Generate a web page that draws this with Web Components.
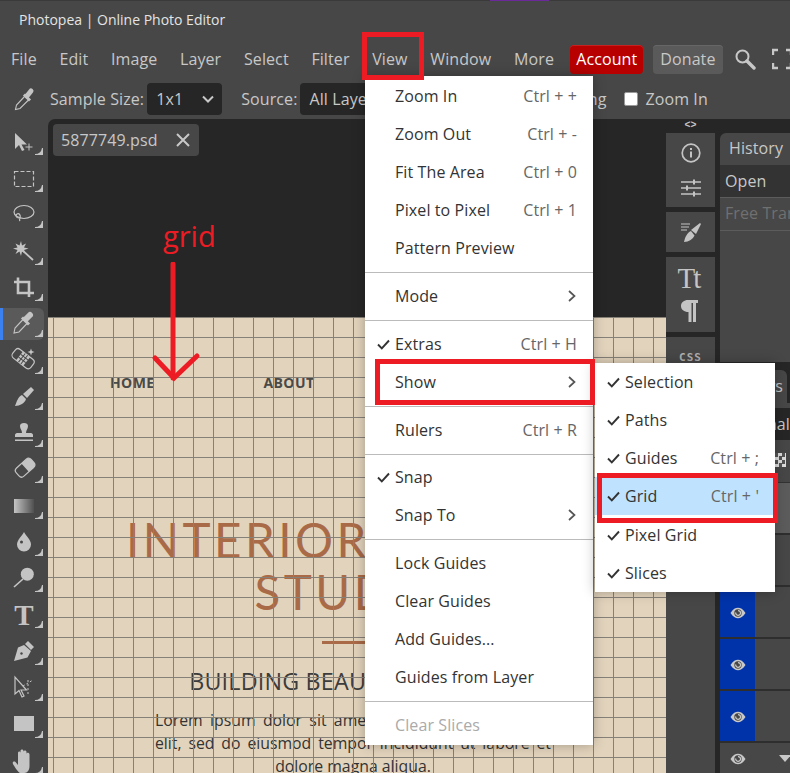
<!DOCTYPE html>
<html>
<head>
<meta charset="utf-8">
<title>Photopea</title>
<style>
    html, body { margin: 0; background: #474747; overflow: hidden; }
</style>
</head>
<body>
<pp-app>
    <pp-titlebar slot="title">Photopea | Online Photo Editor</pp-titlebar>
    <pp-menubar slot="menu"></pp-menubar>
    <pp-options slot="options"></pp-options>
    <pp-toolbar slot="tools"></pp-toolbar>
    <pp-document slot="doc" tab="5877749.psd"></pp-document>
    <pp-dock slot="dock"></pp-dock>
    <pp-panels slot="panels"></pp-panels>

    <pp-menu slot="overlay" style="left:365px;top:76px;width:228px;height:669px;padding-top:1px">
        <pp-item label="Zoom In" keys="Ctrl + +"></pp-item>
        <pp-item label="Zoom Out" keys="Ctrl + -"></pp-item>
        <pp-item label="Fit The Area" keys="Ctrl + 0"></pp-item>
        <pp-item label="Pixel to Pixel" keys="Ctrl + 1"></pp-item>
        <pp-item label="Pattern Preview"></pp-item>
        <pp-sep></pp-sep>
        <pp-item label="Mode" arrow></pp-item>
        <pp-sep></pp-sep>
        <pp-item label="Extras" keys="Ctrl + H" checked></pp-item>
        <pp-item label="Show" arrow></pp-item>
        <pp-sep></pp-sep>
        <pp-item label="Rulers" keys="Ctrl + R"></pp-item>
        <pp-sep style="margin-bottom:3.500px"></pp-sep>
        <pp-item label="Snap" checked></pp-item>
        <pp-item label="Snap To" arrow></pp-item>
        <pp-sep></pp-sep>
        <pp-item label="Lock Guides"></pp-item>
        <pp-item label="Clear Guides"></pp-item>
        <pp-item label="Add Guides..."></pp-item>
        <pp-item label="Guides from Layer"></pp-item>
        <pp-sep></pp-sep>
        <pp-item label="Clear Slices" disabled></pp-item>
    </pp-menu>

    <pp-menu slot="overlay" style="left:595px;top:363px;width:180px;height:229px">
        <pp-item label="Selection" checked></pp-item>
        <pp-item label="Paths" checked></pp-item>
        <pp-item label="Guides" keys="Ctrl + ;" checked></pp-item>
        <pp-item label="Grid" keys="Ctrl + '" checked active></pp-item>
        <pp-item label="Pixel Grid" checked style="margin-top:1px"></pp-item>
        <pp-item label="Slices" checked></pp-item>
    </pp-menu>

    <pp-mark slot="overlay" style="left:362px;top:32px;width:62px;height:48px"></pp-mark>
    <pp-mark slot="overlay" style="left:375px;top:359px;width:220px;height:46px"></pp-mark>
    <pp-mark slot="overlay" style="left:597px;top:473px;width:181px;height:50px"></pp-mark>
    <pp-note slot="overlay" style="left:150px;top:217px">grid</pp-note>
</pp-app>

<script>
const EYE = `<svg width="16" height="12" viewBox="0 0 16 12"><path d="M.5 6C3 2 5.500.8 8 .8S13 2 15.500 6C13 10 10.500 11.200 8 11.200S3 10 .5 6z" fill="#c8c8c8"/><circle cx="8" cy="6" r="3.700" fill="#474747"/><path d="M5.800 5.500A2.400 2.400 0 1 0 8 3.600" fill="none" stroke="#c8c8c8" stroke-width="1.300"/></svg>`;

class PpApp extends HTMLElement {
    constructor() {
        super();
        this.attachShadow({ mode: 'open' });
        this.shadowRoot.innerHTML = `
            <style>
                :host {
                    display: block;
                    position: relative;
                    width: 790px;
                    height: 773px;
                    overflow: hidden;
                    background: #474747;
                    color: #c8c8c8;
                    font: 16px "Open Sans", "Noto Sans", sans-serif;
                    letter-spacing: .1px;
                }
                .strip { height: 1px; background: #3a3a3a; display: flex; }
                .strip i { display: block; width: 59px; margin-left: 490px; background: #6a2a9a; }
                .work { display: flex; height: 654px; }
                ::slotted([slot="doc"]) { flex: none; }
            </style>
            <div class="strip"><i></i></div>
            <slot name="title"></slot>
            <slot name="menu"></slot>
            <slot name="options"></slot>
            <div class="work">
                <slot name="tools"></slot>
                <slot name="doc"></slot>
                <slot name="dock"></slot>
                <slot name="panels"></slot>
            </div>
            <slot name="overlay"></slot>
        `;
    }
}

class PpTitlebar extends HTMLElement {
    constructor() {
        super();
        this.attachShadow({ mode: 'open' });
        this.shadowRoot.innerHTML = `
            <style>
                :host {
                    display: flex;
                    align-items: center;
                    height: 37px;
                    padding: 0 0 2px 19px;
                    font-size: 14px;
                    letter-spacing: 0;
                    color: #e4e4e4;
                }
            </style>
            <slot></slot>
        `;
    }
}

class PpMenubar extends HTMLElement {
    constructor() {
        super();
        this.attachShadow({ mode: 'open' });
        const names = ['File', 'Edit', 'Image', 'Layer', 'Select', 'Filter', 'View', 'Window', 'More'];
        this.shadowRoot.innerHTML = `
            <style>
                :host {
                    display: flex;
                    align-items: center;
                    height: 38px;
                    padding-left: 11px;
                    gap: 22.700px;
                    white-space: nowrap;
                }
                .btn {
                    display: flex;
                    align-items: center;
                    height: 29px;
                    padding: 0 6px;
                    border-radius: 4px;
                    box-sizing: border-box;
                }
                .acc { background: #b80000; color: #fff; margin-left: -6.500px; box-shadow: inset 0 1px #c62222; }
                .don { background: #5a5a5a; margin-left: -12.700px; padding: 0 7px; box-shadow: inset 0 1px #666; }
                svg { display: block; flex: none; }
            </style>
            ${names.map(n => `<span>${n}</span>`).join('')}
            <span class="btn acc">Account</span>
            <span class="btn don">Donate</span>
            <svg style="margin-left:-11.700px" width="22" height="22" viewBox="0 0 22 22" fill="none" stroke="#c8c8c8">
                <circle cx="8.500" cy="8.500" r="6" stroke-width="2"/>
                <path d="M13 13l7 7" stroke-width="3.400" stroke-linecap="round"/>
            </svg>
            <svg style="margin-left:-6.700px" width="20" height="22" viewBox="0 0 20 22" fill="none" stroke="#c8c8c8" stroke-width="2.400">
                <path d="M1 7V2H6M14 2H19V7M19 15V20H14M6 20H1V15"/>
            </svg>
        `;
    }
}

class PpOptions extends HTMLElement {
    constructor() {
        super();
        this.attachShadow({ mode: 'open' });
        this.shadowRoot.innerHTML = `
            <style>
                :host {
                    display: flex;
                    align-items: center;
                    height: 41px;
                    padding-left: 14px;
                    white-space: nowrap;
                }
                .sel {
                    display: flex;
                    align-items: center;
                    justify-content: space-between;
                    box-sizing: border-box;
                    height: 32px;
                    padding: 0 8px 0 9px;
                    background: #262626;
                    border-radius: 4px;
                }
                .box {
                    width: 14px;
                    height: 14px;
                    background: #fff;
                    border: 1px solid #999;
                    box-sizing: border-box;
                    border-radius: 2px;
                    margin: 0 7px 0 22px;
                }
                svg { display: block; flex: none; }
            </style>
            <svg width="22" height="24" viewBox="0 0 22 24" fill="none" stroke="#c4c4c4">
                <path d="M11 9L2.500 18 1.500 22.500 6 21.500 14.500 13" stroke-width="1.100"/>
                <path d="M10 7.500l6 6" stroke-width="3"/>
                <path d="M13 9l4-5" stroke-width="5" stroke-linecap="round"/>
            </svg>
            <span style="margin-left:14px">Sample Size:</span>
            <div class="sel" style="width:75px;margin-left:3px">1x1
                <svg width="12" height="8" viewBox="0 0 12 8" fill="none" stroke="#c8c8c8" stroke-width="2"><path d="M1 1.500l5 5 5-5"/></svg>
            </div>
            <span style="margin-left:19px">Source:</span>
            <div class="sel" style="width:190px;margin-left:3px">All Layers</div>
            <span style="margin-left:-36px;width:148px;text-align:right">Show Sampling Ring</span>
            <div class="box"></div>
            <span>Zoom In</span>
        `;
    }
}

class PpTool extends HTMLElement {
    constructor() {
        super();
        this.attachShadow({ mode: 'open' });
        this.shadowRoot.innerHTML = `
            <style>
                :host {
                    display: flex;
                    align-items: center;
                    justify-content: center;
                    position: relative;
                    height: 36.400px;
                    width: 48px;
                    color: #c4c4c4;
                }
                :host([active])::before {
                    content: "";
                    position: absolute;
                    left: 0;
                    top: 2px;
                    bottom: 2px;
                    width: 44px;
                    background: #5a5a5a;
                    border-left: 3px solid #3b82f0;
                    box-sizing: border-box;
                    border-radius: 0 6px 6px 0;
                }
                .corner { position: absolute; right: 5px; bottom: 5px; }
                ::slotted(*) { position: relative; }
            </style>
            <slot></slot>
            <svg class="corner" width="8" height="7" viewBox="0 0 8 7"><path d="M0 6Q6 6 7 0L8 0V7H0z" fill="#c4c4c4"/></svg>
        `;
    }
}

class PpToolbar extends HTMLElement {
    constructor() {
        super();
        this.attachShadow({ mode: 'open' });
        const icon = inner => `<svg width="32" height="32" viewBox="0 0 32 32" fill="#c4c4c4" stroke="none">${inner}</svg>`;
        const tools = [
            icon('<path d="M7 7V23l4-4 3 6 2.500-1-3-5.500H19z"/><path d="M17.500 21h7M21 17.500v7" stroke="#c4c4c4" fill="none"/>'),
            icon('<rect x="6.500" y="8.500" width="19" height="15" fill="none" stroke="#c4c4c4" stroke-width="1.200" stroke-dasharray="4 2"/>'),
            icon('<g fill="none" stroke="#c4c4c4" stroke-width="1.200"><ellipse cx="16" cy="13" rx="10" ry="6.500"/><path d="M11 19c-3 0-4-3-2-4s4 1 3 4c-.5 1-1 2 0 3"/></g>'),
            icon('<path d="M13 14l12 11" stroke="#c4c4c4" stroke-width="1.800"/><path d="M13 6l1 4.500 4-2-2 4 4.500 1-4.500 1.500 2 4-4-2.500-1 4.500-1.500-4.500-4 2.500 2-4-4.500-1.500 4.500-1-2-4 4 2z"/>'),
            icon('<path d="M10 5.500V21H26M6 10H21V25" fill="none" stroke="#c4c4c4" stroke-width="2.600"/>'),
            icon('<path d="M15.500 11L7 20 6 25 11 24 19 15.500" fill="none" stroke="#c4c4c4" stroke-width="1.100"/><path d="M14 9.500l7 7" stroke="#c4c4c4" stroke-width="3"/><path d="M18 11l4-4" stroke="#c4c4c4" stroke-width="6" stroke-linecap="round"/>'),
            icon('<g transform="translate(0 -3) rotate(38 15 16)"><rect x="4" y="11" width="23" height="11" rx="3.500" fill="none" stroke="#c4c4c4" stroke-width="1.200"/><rect x="11" y="11" width="9" height="11" fill="#c4c4c4"/><path d="M14 11v11M17 11v11M11 14.500h9M11 18h9" stroke="#474747"/></g><path d="M23 3.500l.9 2.600 2.600.9-2.600.9-.9 2.600-.9-2.600-2.600-.9 2.600-.9z"/>'),
            icon('<path d="M7 25C9 20 10 16 14 14L18 18C17 22 12 25 7 25Z"/><path d="M15 13L23 6L26 9L19 17Z"/>'),
            icon('<path d="M12 9c0-2 1.500-3 4-3s4 1 4 3c0 3-2 4-2 7h5c1 0 2 1 2 2v2H7v-2c0-1 1-2 2-2h5c0-3-2-4-2-7z"/><rect x="7" y="22.500" width="18" height="1.500"/>'),
            icon('<g transform="translate(0 -1) rotate(-42 16 15)"><rect x="7" y="10" width="20" height="11" rx="3.500" fill="none" stroke="#c4c4c4" stroke-width="1.200"/><path d="M17 10h6.500a3.500 3.500 0 0 1 3.500 3.500v4a3.500 3.500 0 0 1-3.500 3.500H17z"/></g>'),
            '<svg width="32" height="32" viewBox="0 0 32 32"><defs><linearGradient id="g"><stop offset="0" stop-color="#c4c4c4"/><stop offset="1" stop-color="#505050"/></linearGradient></defs><rect x="6" y="9" width="20" height="14" fill="url(#g)"/></svg>',
            icon('<path d="M16 6c2 4 7 8 7 12.500a7 7 0 0 1-14 0C9 14 14 10 16 6z"/><circle cx="13.500" cy="16" r="1.500" fill="#474747"/>'),
            icon('<circle cx="19.300" cy="11.200" r="6.500"/><path d="M15 16L6 24" stroke="#c4c4c4" stroke-width="1.600"/>'),
            '<svg width="32" height="32" viewBox="0 0 32 32"><text x="16" y="26" text-anchor="middle" font-family="Liberation Serif" font-weight="700" font-size="29" fill="#c4c4c4">T</text></svg>',
            icon('<path d="M20 5l6 6-3 3-6-6z"/><path d="M16 9l7 6-3.500 6.500L6 25l4-13.500zM7.500 23.500l5-5" fill-rule="evenodd"/><circle cx="13.500" cy="17.500" r="1.200" fill="#474747"/>'),
            icon('<path d="M7 5V22L11 18.500 14 25 16 24 13 18H18.500z" fill="none" stroke="#c4c4c4" stroke-width="1.200"/><path d="M20 8v14M15 14l10-6" stroke="#c4c4c4" stroke-dasharray="2 2"/>'),
            icon('<rect x="6" y="8" width="20" height="15"/>'),
            icon('<path d="M12 28c-2-1-6-7-7-9s1-3 2.500-2l2.500 3V8c0-2 2.500-2 2.500 0v-2c0-2 3-2 3 0v1c0-2 3-2 3 0v2c0-2 3-1.500 3 .5V21c0 4-2 7-5 7z"/>')
        ];
        this.shadowRoot.innerHTML = `
            <style>
                :host { display: block; width: 48px; flex: none; padding-top: 5px; box-sizing: border-box; }
            </style>
            ${tools.map((t, i) => `<pp-tool ${i === 5 ? 'active' : ''}>${t}</pp-tool>`).join('')}
        `;
    }
}

class PpDocument extends HTMLElement {
    constructor() {
        super();
        this.attachShadow({ mode: 'open' });
        this.shadowRoot.innerHTML = `
            <style>
                :host {
                    display: flex;
                    flex-direction: column;
                    width: 618px;
                    background: #262626;
                    border-radius: 7px 0 0 0;
                    overflow: hidden;
                }
                .top { height: 198px; padding: 5px; box-sizing: border-box; flex: none; }
                .tab {
                    display: inline-flex;
                    align-items: center;
                    justify-content: space-between;
                    box-sizing: border-box;
                    width: 146px;
                    height: 32px;
                    padding: 0 9px 0 8px;
                    background: #474747;
                    border-radius: 4px;
                }
                .page {
                    position: relative;
                    flex: 1;
                    background: #e2d3bc;
                    padding-top: 56px;
                    color: #333;
                    text-align: center;
                    letter-spacing: 0;
                }
                .page::after {
                    content: "";
                    position: absolute;
                    inset: 0;
                    background:
                        repeating-linear-gradient(to right, #858078 0 1px, transparent 1px 20px) 5px 0,
                        repeating-linear-gradient(to bottom, #858078 0 1px, transparent 1px 20px);
                }
                .nav {
                    display: flex;
                    gap: 109px;
                    padding-left: 62px;
                    font-size: 14px;
                    line-height: 20px;
                    font-weight: 700;
                    letter-spacing: .4px;
                    color: #4a4a48;
                }
                h1 {
                    margin: 121px 0 0;
                    width: 610px;
                    font: 400 47.500px/52px Lato, sans-serif;
                    letter-spacing: 3.500px;
                    color: #a96a47;
                }
                .rule { width: 62px; height: 3px; background: #a96a47; margin: 23px 0 0 274px; }
                h2 {
                    margin: 22px 0 0;
                    width: 610px;
                    font: 400 23.300px/30px "Open Sans", sans-serif;
                    letter-spacing: .2px;
                    color: #3c3c3c;
                }
                p {
                    margin: 13px 0 0 107px;
                    width: 396px;
                    font-size: 15.800px;
                    line-height: 23px;
                    font-weight: 500;
                    text-align: justify;
                    text-align-last: center;
                }
            </style>
            <div class="top">
                <div class="tab"><span id="name"></span>
                    <svg width="14" height="14" viewBox="0 0 14 14" stroke="#c8c8c8" stroke-width="2"><path d="M1 1l12 12M13 1L1 13"/></svg>
                </div>
            </div>
            <div class="page">
                <div class="nav"><span>HOME</span><span>ABOUT</span></div>
                <h1>INTERIOR DESIGN<br>STUDIO</h1>
                <div class="rule"></div>
                <h2>BUILDING BEAUTIFUL HOMES</h2>
                <p>Lorem ipsum dolor sit amet, consectetur adipiscing elit, sed do eiusmod tempor incididunt ut labore et dolore magna aliqua.</p>
            </div>
        `;
        this.shadowRoot.querySelector('#name').textContent = this.getAttribute('tab') || '';
    }
}

class PpDock extends HTMLElement {
    constructor() {
        super();
        this.attachShadow({ mode: 'open' });
        this.shadowRoot.innerHTML = `
            <style>
                :host {
                    display: flex;
                    flex-direction: column;
                    flex: none;
                    width: 54px;
                    box-sizing: border-box;
                    padding-right: 5px;
                    background: #262626;
                    gap: 5px;
                    color: #c4c4c4;
                }
                .arrows { height: 14px; font: 700 10px/14px "Liberation Mono", monospace; text-align: center; margin-bottom: -5px; letter-spacing: 0; }
                .grp { background: #474747; display: flex; flex-direction: column; align-items: center; }
                .tt { font: 29px/36px "Liberation Serif", serif; height: 36px; letter-spacing: -2px; margin-left: -4px; }
                .css { font: 700 11px/20px "DejaVu Sans Mono", monospace; letter-spacing: 1px; color: #b0b0b0; }
                svg { display: block; flex: none; }
            </style>
            <div class="arrows">&lt;&gt;</div>
            <div class="grp" style="height:74px;padding-top:10px;box-sizing:border-box">
                <svg width="20" height="20" viewBox="0 0 20 20" fill="none" stroke="#c4c4c4" stroke-width="1.700"><circle cx="10" cy="10" r="8.800"/><path d="M10 8.500v6M10 5v2" stroke-width="2"/></svg>
                <svg style="margin-top:16px" width="22" height="18" viewBox="0 0 22 18" stroke="#c4c4c4" stroke-width="1.600"><path d="M1 3h20M1 9h20M1 15h20"/><path d="M14 .5v5M7 6.500v5M14 12.500v5" stroke-width="2"/></svg>
            </div>
            <div class="grp" style="height:40px;justify-content:center">
                <svg width="24" height="24" viewBox="0 0 24 24" fill="#c4c4c4"><path d="M5 22c1-5 3-9 7-11l3.500 4.500C14 19 10 22 5 22z"/><path d="M12 10l9-7 1 1-5 10z"/><path d="M2 4h9M2 7h8M2 10h6" stroke="#c4c4c4"/></svg>
            </div>
            <div class="grp" style="height:75px;padding-top:3px;box-sizing:border-box">
                <div class="tt">Tt</div>
                <svg style="margin:3px 0 0 -4px" width="18" height="24" viewBox="0 0 18 24" fill="#c4c4c4"><path d="M8 1H18V4H16V23H13V4H11.500V23H8.500V13C4 13 1 10.500 1 7S4 1 8 1z"/></svg>
            </div>
            <div class="grp" style="flex:1;padding-top:11px"><span class="css">CSS</span></div>
        `;
    }
}

class PpPanels extends HTMLElement {
    constructor() {
        super();
        this.attachShadow({ mode: 'open' });
        const row = (blue, bg) => `<div class="row" style="${bg ? 'background:' + bg : ''}"><div class="eye ${blue ? 'blue' : ''}">${EYE}</div></div>`;
        this.shadowRoot.innerHTML = `
            <style>
                :host {
                    display: flex;
                    flex-direction: column;
                    flex: 1;
                    min-width: 0;
                    overflow: hidden;
                    background: #262626;
                    white-space: nowrap;
                    padding-top: 14px;
                    gap: 8px;
                }
                .hist { height: 229px; background: #474747; border-radius: 6px 0 0 0; flex: none; }
                .t { height: 32px; line-height: 31px; padding-left: 9px; }
                .r { height: 32px; line-height: 33px; padding-left: 5px; border-bottom: 1px solid #5c5c5c; }
                .lay { flex: 1; display: flex; flex-direction: column; background: #474747; }
                .tabs { height: 33px; display: flex; background: #262626; flex: none; }
                .tabs span { width: 67px; background: #474747; border-radius: 6px 6px 0 0; text-align: right; line-height: 33px; padding-right: 4px; box-sizing: border-box; }
                .blend { height: 32px; margin-top: 5px; background: #262626; line-height: 32px; text-align: right; flex: none; }
                .opts { height: 43px; position: relative; flex: none; border-bottom: 1px solid #333; box-sizing: border-box; }
                .check {
                    position: absolute; left: 55px; top: 13px; width: 11px; height: 14px;
                    background: conic-gradient(#ddd 25%, #555 0 50%, #ddd 0 75%, #555 0) 0 0 / 7px 7px;
                }
                .row { height: 52px; flex: none; display: flex; box-sizing: border-box; border-bottom: 2px solid #2e2e2e; }
                .eye { width: 35px; display: flex; align-items: center; justify-content: center; padding-top: 2px; box-sizing: border-box; }
                .eye.blue { background: #0033aa; }
                .foot { flex: 1; position: relative; display: flex; }
                .tri { position: absolute; left: 59px; top: 12px; width: 0; height: 0; border: 6px solid transparent; border-top: 7px solid #c8c8c8; }
            </style>
            <div class="hist">
                <div class="t">History</div>
                <div class="r" style="background:#333">Open</div>
                <div class="r" style="color:#707070;line-height:31px">Free Transform</div>
            </div>
            <div class="lay">
                <div class="tabs"><span>Layers</span></div>
                <div class="blend">Normal</div>
                <div class="opts"><div class="check"></div></div>
                ${row(false, '#5c5c5c')}
                ${row(false)}
                ${row(true)}
                ${row(true)}
                ${row(true)}
                <div class="foot"><div class="eye">${EYE}</div><div class="tri"></div></div>
            </div>
        `;
    }
}

class PpMenu extends HTMLElement {
    constructor() {
        super();
        this.attachShadow({ mode: 'open' });
        this.shadowRoot.innerHTML = `
            <style>
                :host {
                    display: block;
                    position: absolute;
                    box-sizing: border-box;
                    background: #fff;
                    color: #333;
                    box-shadow: 0 0 12px rgba(0, 0, 0, .28);
                }
            </style>
            <slot></slot>
        `;
    }
}

class PpItem extends HTMLElement {
    constructor() {
        super();
        this.attachShadow({ mode: 'open' });
        const keys = this.getAttribute('keys');
        this.shadowRoot.innerHTML = `
            <style>
                :host {
                    display: flex;
                    align-items: center;
                    position: relative;
                    height: 38px;
                    padding: 0 16px 0 30px;
                    white-space: nowrap;
                }
                :host([disabled]) { color: #aaa; }
                :host([active]) { background: #bfe3ff; }
                .keys { margin-left: auto; color: #666; }
                .chk { position: absolute; left: 12px; top: 14px; }
                .arr { margin-left: auto; margin-right: 1px; }
            </style>
            ${this.hasAttribute('checked') ? '<svg class="chk" width="13" height="11" viewBox="0 0 13 11" fill="none" stroke="#333" stroke-width="1.900"><path d="M1 5.500l3.800 3.800L12 1.500"/></svg>' : ''}
            <span id="label"></span>
            ${keys ? '<span class="keys" id="keys"></span>' : ''}
            ${this.hasAttribute('arrow') ? '<svg class="arr" width="8" height="12" viewBox="0 0 8 12" fill="none" stroke="#555" stroke-width="1.700"><path d="M1 1l5.500 5L1 11"/></svg>' : ''}
        `;
        this.shadowRoot.querySelector('#label').textContent = this.getAttribute('label');
        if (keys) this.shadowRoot.querySelector('#keys').textContent = keys;
    }
}

class PpSep extends HTMLElement {
    constructor() {
        super();
        this.attachShadow({ mode: 'open' });
        this.shadowRoot.innerHTML = `
            <style>
                :host { display: block; height: 1px; margin: 4.500px 0; background: #bbb; }
            </style>
        `;
    }
}

class PpMark extends HTMLElement {
    constructor() {
        super();
        this.attachShadow({ mode: 'open' });
        this.shadowRoot.innerHTML = `
            <style>
                :host { display: block; position: absolute; box-sizing: border-box; border: 5px solid #ed1c24; }
            </style>
        `;
    }
}

class PpNote extends HTMLElement {
    constructor() {
        super();
        this.attachShadow({ mode: 'open' });
        this.shadowRoot.innerHTML = `
            <style>
                :host {
                    display: block;
                    position: absolute;
                    font-size: 29px;
                    line-height: 38px;
                    letter-spacing: 0;
                    color: #ed1c24;
                    width: 90px;
                }
                span { margin-left: 13px; }
                svg { display: block; margin-top: 7px; }
            </style>
            <span><slot></slot></span>
            <svg width="60" height="124" viewBox="0 0 60 124" fill="none" stroke="#ed1c24" stroke-width="5" stroke-linecap="round">
                <path d="M23 2V116"/>
                <path d="M5 96L24 116 47 94"/>
            </svg>
        `;
    }
}

customElements.define('pp-app', PpApp);
customElements.define('pp-titlebar', PpTitlebar);
customElements.define('pp-menubar', PpMenubar);
customElements.define('pp-options', PpOptions);
customElements.define('pp-tool', PpTool);
customElements.define('pp-toolbar', PpToolbar);
customElements.define('pp-document', PpDocument);
customElements.define('pp-dock', PpDock);
customElements.define('pp-panels', PpPanels);
customElements.define('pp-menu', PpMenu);
customElements.define('pp-item', PpItem);
customElements.define('pp-sep', PpSep);
customElements.define('pp-mark', PpMark);
customElements.define('pp-note', PpNote);
</script>
</body>
</html>
